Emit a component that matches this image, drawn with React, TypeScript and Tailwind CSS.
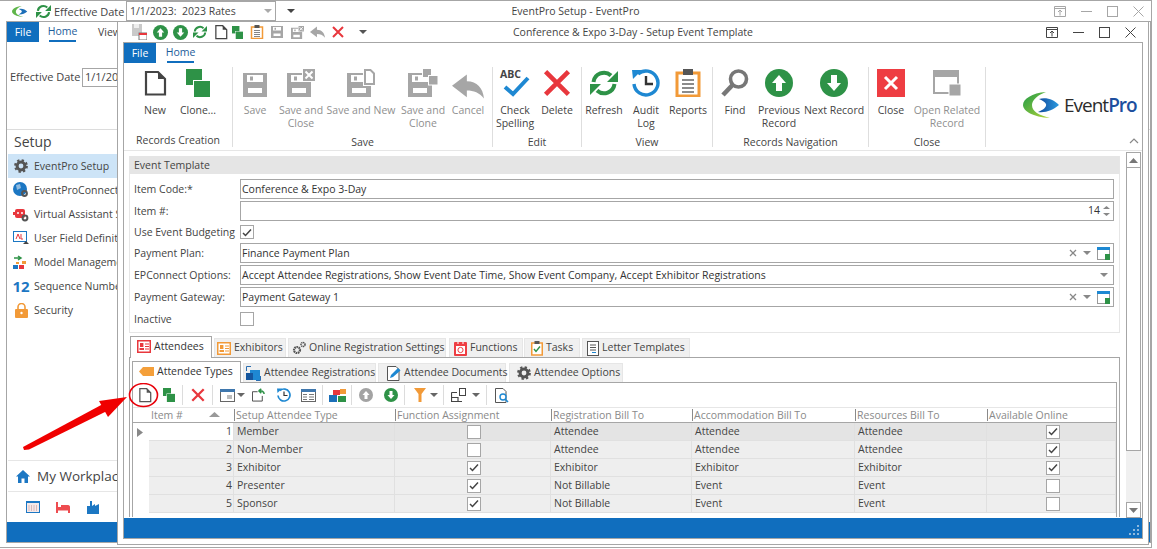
import React from "react";

const G = "#2e9247";
const R = "#e8373d";
const B = "#1e88d2";
const D = "#a6a6a6";

type P = { s?: number; c?: string; className?: string };
const Svg = ({ s = 28, v = 28, children, className }: { s?: number; v?: number; children: React.ReactNode; className?: string }) => (
  <svg width={s} height={s} viewBox={`0 0 ${v} ${v}`} className={className ?? "shrink-0"}>{children}</svg>
);

const Doc = ({ s = 28, c = "#444" }: P) => (
  <Svg s={s}><path d="M5 3 H17 L24 10 V25.5 H5 Z" fill="#fff" stroke={c} strokeWidth="2.2" /><path d="M17 3 V10 H24 Z" fill={c} /></Svg>
);
const Clone = ({ s = 28 }: P) => (
  <svg width={(s * 24) / 28} height={s} viewBox="0 0 24 28" className="shrink-0">
    <rect x="0" y="0" width="16" height="16" fill={G} />
    <rect x="7.5" y="11.5" width="17" height="17" fill={G} stroke="#fff" strokeWidth="1" />
  </svg>
);
const Disk = ({ c = D }: { c?: string }) => (
  <path d="M0 0 H24 V24 H0 Z M4 2 V9 H20 V2 Z M7 3.5 H10 V7.5 H7 Z M5 15 V20 H19 V15 Z" fill={c} fillRule="evenodd" />
);
const Save = ({ s = 24, c = D }: P) => <Svg s={s} v={24}><Disk c={c} /></Svg>;
const SaveClose = ({ s = 28, c = D }: P) => (
  <Svg s={s}>
    <g transform="translate(0 4)"><Disk c={c} /></g>
    <rect x="15.5" y="-.5" width="13" height="13" fill={c} stroke="#fff" /><path d="M18.5 2.5 L25.5 9.5 M25.5 2.5 L18.5 9.5" stroke="#fff" strokeWidth="2" />
  </Svg>
);
const SaveNew = ({ c = D }: P) => (
  <Svg s={28}>
    <g transform="translate(0 4)"><Disk c={c} /></g>
    <path d="M16 0 H23 L28 5 V17 H16 Z" fill="#fff" />
    <path d="M18 1 H23.5 L27 4.5 V15 H18 Z" fill="#fff" stroke={c} strokeWidth="2" />
  </Svg>
);
const SaveClone = ({ c = D }: P) => (
  <svg width="30" height="28" viewBox="0 0 30 28" className="shrink-0">
    <g transform="translate(0 4)"><Disk c={c} /></g>
    <rect x="14.5" y="-.5" width="9" height="9" fill={c} stroke="#fff" /><rect x="20.5" y="6.5" width="9.5" height="9.5" fill={c} stroke="#fff" />
  </svg>
);
const Reply = ({ s = 28, c = D }: P) => (
  <Svg s={s}><path d="M0 13 L13 3 V9 C22 9 27 15 28 24 C24 19 19 17 13 17 V23 Z" fill={c} /></Svg>
);
const XIcon = ({ s = 28 }: P) => (
  <Svg s={s}><path d="M4 4 L24 24 M24 4 L4 24" stroke={R} strokeWidth="4" /></Svg>
);
const Refresh = ({ s = 28 }: P) => (
  <Svg s={s}>
    <path d="M3.5 13 A10.5 10.5 0 0 1 21 6.5" fill="none" stroke={G} strokeWidth="4" />
    <polygon points="28,2 28,13 17,13" fill={G} />
    <path d="M24.5 15 A10.5 10.5 0 0 1 7 21.5" fill="none" stroke={G} strokeWidth="4" />
    <polygon points="0,26 0,15 11,15" fill={G} />
  </Svg>
);
const Audit = ({ s = 28 }: P) => (
  <Svg s={s}>
    <path d="M6 5 A12 12 0 1 1 2 15" fill="none" stroke={B} strokeWidth="3.4" />
    <polygon points="0,1 10,1 1,10" fill={B} />
    <path d="M14 7 V15 H21" fill="none" stroke="#333" strokeWidth="2.4" />
  </Svg>
);
const Reports = ({ s = 28 }: P) => (
  <Svg s={s}>
    <rect x="3" y="4" width="22" height="23" fill="#fff" stroke="#f29a38" strokeWidth="3" />
    <rect x="9" y="0" width="10" height="6" fill="#555" />
    <path d="M8 11 H20 M8 15 H20 M8 19 H20 M8 23 H20" stroke="#666" strokeWidth="1.6" />
  </Svg>
);
const Find = ({ s = 28 }: P) => (
  <Svg s={s}>
    <circle cx="17.5" cy="10" r="8" fill="#fff" stroke="#777" strokeWidth="3.6" />
    <path d="M11.5 16 L2 26" stroke="#777" strokeWidth="4.6" />
  </Svg>
);
const Arrow = ({ s = 28, up, c = G }: P & { up?: boolean }) => (
  <Svg s={s}>
    <circle cx="14" cy="14" r="14" fill={c} />
    <path d={up ? "M14 6 L21 14 H17 V22 H11 V14 H7 Z" : "M14 22 L21 14 H17 V6 H11 V14 H7 Z"} fill="#fff" />
  </Svg>
);
const CloseSq = ({ s = 28 }: P) => (
  <Svg s={s}><rect width="28" height="28" fill="#ee3d42" /><path d="M8 8 L20 20 M20 8 L8 20" stroke="#fff" strokeWidth="3" /></Svg>
);
const OpenRel = ({ s = 28 }: P) => (
  <Svg s={s}>
    <rect x="1" y="2" width="24" height="22" fill="#fff" stroke={D} strokeWidth="2" /><rect x="0" y="1" width="26" height="7" fill={D} />
    <rect x="16" y="15" width="12" height="12" fill={D} stroke="#fff" />
  </Svg>
);
const Abc = () => (
  <div className="relative w-[30px] h-[28px]">
    <span className="absolute left-0 top-[-2px] text-[10.5px] font-bold text-[#444]">ABC</span>
    <svg width="30" height="28" viewBox="0 0 30 28" className="absolute left-0 top-0"><path d="M5 18 L13 25 L28 9" fill="none" stroke={B} strokeWidth="4" /></svg>
  </div>
);

const Caret = ({ c = "#666", className = "" }: { c?: string; className?: string }) => (
  <svg width="8" height="4" viewBox="0 0 8 4" className={`shrink-0 ${className}`}><path d="M0 0 H8 L4 4 Z" fill={c} /></svg>
);

const WinButtons = ({ c, gap }: { c: string; gap: string }) => (
  <div className={`flex items-center ${gap}`}>
    <svg width="12" height="11" viewBox="0 0 12 11"><path d="M.5.5 H11.5 V10.5 H.5 Z M.5 2.5 H11.5" fill="none" stroke={c} /><path d="M6 9.5 V4.5 M4 6 L6 4 L8 6" fill="none" stroke={c} /></svg>
    <svg width="11" height="11" viewBox="0 0 11 11"><path d="M0 5.5 H11" stroke={c} /></svg>
    <svg width="11" height="11" viewBox="0 0 11 11"><rect x=".5" y=".5" width="10" height="10" fill="none" stroke={c} /></svg>
    <svg width="11" height="11" viewBox="0 0 11 11"><path d="M.5 .5 L10.5 10.5 M10.5 .5 L.5 10.5" stroke={c} /></svg>
  </div>
);

const RBtn = ({ w, label, dis, mt = 0, children }: { w: number; label: React.ReactNode; dis?: boolean; mt?: number; children: React.ReactNode }) => (
  <div className={`flex flex-col items-center ${dis ? "text-[#8f8f8f]" : "text-[#444]"}`} style={{ width: w }}>
    <div className="h-[37px] flex items-start justify-center pt-[2px]"><div style={{ marginTop: mt }}>{children}</div></div>
    <div className="text-center whitespace-nowrap leading-[13px] text-[10.5px]">{label}</div>
  </div>
);

const Group = ({ w, pl, label, children }: { w: number; pl: number; label: string; children: React.ReactNode }) => (
  <div className="flex flex-col border-r border-[#dedede] h-[80px] shrink-0" style={{ width: w }}>
    <div className="flex h-[65px]" style={{ paddingLeft: pl }}>{children}</div>
    <div className="text-center text-[10.5px] leading-[14px] text-[#444] mt-[3px] pt-[2px] whitespace-nowrap">{label}</div>
  </div>
);

const Logo = () => (
  <div className="flex items-center">
    <svg width="40" height="26" viewBox="0 0 40 26" className="shrink-0">
      <defs>
        <linearGradient id="lg" x1="0" y1="0" x2="1" y2="1"><stop offset="0" stopColor="#1e9a47" /><stop offset="1" stopColor="#b7d53a" /></linearGradient>
        <linearGradient id="lb" x1="0" y1="0" x2="1" y2="0"><stop offset="0" stopColor="#12489b" /><stop offset="1" stopColor="#2b9be0" /></linearGradient>
      </defs>
      <path d="M23 0 C9 1 0 7 0 13 C0 19 10 25 27 26 C15 23 9 19 9 13 C9 8 15 3 23 0 Z" fill="url(#lg)" />
      <path d="M16 7 C24 5 31 8 36 13 C30 18 23 21 15 20 C20 18 24 15 23 12 C22 10 19 8 16 7 Z" fill="url(#lb)" />
    </svg>
    <span className="text-[19px] tracking-[-1px] leading-none text-[#2c2c2c] ml-[1px]">Event<span className="text-[#1c4f9e] font-semibold">Pro</span></span>
  </div>
);

const Input = ({ children, right }: { children?: React.ReactNode; right?: React.ReactNode }) => (
  <div className="flex-1 h-[20px] border border-[#a6a6a6] bg-white flex items-center pl-[1px] pr-[3px] text-[10.5px] text-[#333]">
    <div className="flex-1 whitespace-nowrap pt-[1px]">{children}</div>
    {right}
  </div>
);
const Check = ({ on }: { on?: boolean }) => (
  <div className="w-[14px] h-[14px] border border-[#a6a6a6] bg-white shrink-0 flex items-center justify-center">
    {on && <svg width="10" height="9" viewBox="0 0 10 9"><path d="M1 5 L3.5 7.5 L9 1.5" fill="none" stroke="#444" strokeWidth="1.5" /></svg>}
  </div>
);
const Row = ({ label, children, h = "h-[20px]" }: { label: string; children: React.ReactNode; h?: string }) => (
  <div className={`flex items-center ${h} mb-[2px]`}>
    <div className="w-[106px] shrink-0 text-[10.5px] text-[#444] whitespace-nowrap pt-[2px]">{label}</div>
    {children}
  </div>
);
const PickIcon = () => (
  <svg width="13" height="13" viewBox="0 0 13 13" className="shrink-0"><rect x=".5" y=".5" width="12" height="12" fill="#fff" stroke="#9a9a9a" /><rect width="13" height="3" fill={B} /><rect x="8" y="7" width="5" height="6" fill={G} /></svg>
);
const ClearPick = () => (
  <div className="flex items-center">
    <svg width="8" height="8" viewBox="0 0 8 8" className="mr-[6px]"><path d="M1 1 L7 7 M7 1 L1 7" stroke="#888" strokeWidth="1.3" /></svg>
    <Caret c="#888" className="mr-[6px]" />
    <PickIcon />
  </div>
);

const TabIconA = ({ c }: { c: string }) => (
  <svg width="14" height="13" viewBox="0 0 14 13" className="shrink-0"><rect x=".75" y=".75" width="12.5" height="11.5" fill="#fff" stroke={c} strokeWidth="1.5" /><rect x="3" y="3" width="3.4" height="4" fill={c} /><rect x="2.5" y="8" width="4.5" height="2" fill={c} /><path d="M8 4 H12 M8 6.5 H12 M8 9 H12" stroke={c} /></svg>
);
const Gears = () => (
  <svg width="14" height="14" viewBox="0 0 14 14" className="shrink-0"><circle cx="5" cy="9" r="3" fill="none" stroke="#555" strokeWidth="2.2" strokeDasharray="1.6 .6" /><circle cx="11" cy="3.5" r="2" fill="none" stroke="#555" strokeWidth="1.6" strokeDasharray="1.2 .5" /></svg>
);
const Gear = ({ s = 14 }: { s?: number }) => (
  <svg width={s} height={s} viewBox="0 0 14 14" className="shrink-0"><circle cx="7" cy="7" r="3.9" fill="none" stroke="#555" strokeWidth="3" /><circle cx="7" cy="7" r="5.8" fill="none" stroke="#555" strokeWidth="2.2" strokeDasharray="2.3 2.25" /></svg>
);
const Cal = () => (
  <svg width="13" height="15" viewBox="0 0 13 15" className="shrink-0"><rect width="13" height="14" y="1" fill="#ee3d42" rx="1" /><rect x="2" y="5" width="9" height="8" fill="#fff" /><path d="M4 1 V3 M9 1 V3" stroke="#fff" /><circle cx="6.5" cy="9" r="2.6" fill="none" stroke="#ee3d42" /></svg>
);
const Clip = () => (
  <svg width="12" height="15" viewBox="0 0 12 15" className="shrink-0"><rect x=".75" y="2" width="10.5" height="12" fill="#fff" stroke="#f29a38" strokeWidth="1.5" /><rect x="3.5" y="0" width="5" height="3" fill="#555" /><path d="M3 8 L5 10.5 L9 5.5" fill="none" stroke={G} strokeWidth="1.4" /></svg>
);
const LetterI = () => (
  <svg width="12" height="15" viewBox="0 0 12 15" className="shrink-0"><rect x=".5" y=".5" width="11" height="14" fill="#fff" stroke="#555" /><path d="M3 4 H9 M3 6.5 H9 M3 9 H9" stroke="#555" /><path d="M5 11.5 H9" stroke={B} /></svg>
);
const Tag = () => (
  <svg width="15" height="9" viewBox="0 0 15 9" className="shrink-0"><path d="M4 0 H15 V9 H4 L0 4.5 Z" fill="#f49f3a" /></svg>
);
const Reg = () => (
  <svg width="15" height="15" viewBox="0 0 15 15" className="shrink-0"><path d="M.5 5 V.5 H5 M10 14.5 H14.5 V10" fill="none" stroke="#2a6db0" /><rect x="4" y="4" width="10" height="10" fill={B} /><rect x="0" y="7" width="7" height="7" fill="#15569e" /></svg>
);
const DocEdit = () => (
  <svg width="14" height="15" viewBox="0 0 14 15" className="shrink-0"><path d="M.5 .5 H9 L12 3.5 V14.5 H.5 Z" fill="#fff" stroke="#555" /><path d="M3 12 L4 9 L11 2 L13.5 4.5 L6 11 Z" fill={B} /></svg>
);

const Tab = ({ w, active, icon, label, mr = 2, pl = 2 }: { w: number; active?: boolean; icon: React.ReactNode; label: string; mr?: number; pl?: number }) => (
  <div
    className={`flex items-center gap-[3px] text-[10.5px] whitespace-nowrap shrink-0 ${active
      ? "h-[22px] border border-b-0 border-[#a6a6a6] bg-white text-[#333] mb-[-1px] pb-[2px] relative z-10"
      : "h-[19px] border border-b-0 border-[#e6e6e6] bg-[#f0f0f0] text-[#444]"}`}
    style={{ width: w, marginRight: mr, paddingLeft: pl }}
  >
    {icon}
    <span>{label}</span>
  </div>
);

const Sep = () => <div className="w-px h-[20px] bg-[#dcdcdc] shrink-0" />;
const Tb = ({ w, children, ml = 0 }: { w: number; children?: React.ReactNode; ml?: number }) => (
  <div className="flex items-center justify-center shrink-0" style={{ width: w, marginLeft: ml }}>{children}</div>
);

const Cols = [16, 85, 161, 156, 141, 163, 132, 129];
const headers = ["", "Item #", "Setup Attendee Type", "Function Assignment", "Registration Bill To", "Accommodation Bill To", "Resources Bill To", "Available Online"];
const rows = [
  ["1", "Member", false, "Attendee", "Attendee", "Attendee", true],
  ["2", "Non-Member", false, "Attendee", "Attendee", "Attendee", true],
  ["3", "Exhibitor", true, "Exhibitor", "Exhibitor", "Exhibitor", true],
  ["4", "Presenter", true, "Not Billable", "Event", "Event", false],
  ["5", "Sponsor", true, "Not Billable", "Event", "Event", false],
] as const;

const Grid = () => (
  <div className="text-[10.5px] text-[#444]">
    <div className="flex h-[16px] border-b border-t border-t-[#e6e6e6] border-b-[#a6a6a6] text-[#8a8a8a] leading-[14px]">
      {headers.map((h, i) => (
        <div key={i} className="relative pl-[2px] whitespace-nowrap flex items-center" style={{ width: Cols[i] }}>
          {i > 1 && <span className="absolute left-0 top-[1px] h-[12px] w-px bg-[#8a8a8a]" />}
          {h}
          {i === 1 && <span className="absolute right-[14px] top-[4px]"><svg width="11" height="5" viewBox="0 0 11 5"><path d="M0 5 L5.5 0 L11 5 Z" fill="#999" /></svg></span>}
        </div>
      ))}
    </div>
    {rows.map((r, i) => {
      const bg = i === 0 ? "bg-[#e4e4e4]" : "bg-[#eeeeee]";
      const cell = `flex items-center h-[18px] border-b border-r border-[#e0e0e0] pl-[3px] whitespace-nowrap ${bg}`;
      return (
        <div key={i} className="flex h-[18px]">
          <div className="flex items-center justify-center bg-white" style={{ width: Cols[0] }}>
            {i === 0 && <svg width="6" height="9" viewBox="0 0 6 9" className="mr-[3px]"><path d="M0 0 L6 4.5 L0 9 Z" fill="#888" /></svg>}
          </div>
          <div className={`flex items-center justify-end h-[18px] border-b border-r border-[#e0e0e0] pr-[1px] ${i === 0 ? "bg-white" : "bg-[#eeeeee]"}`} style={{ width: Cols[1] }}>{r[0]}</div>
          <div className={cell} style={{ width: Cols[2] }}>{r[1]}</div>
          <div className={`${cell} justify-center`} style={{ width: Cols[3] }}><Check on={r[2]} /></div>
          <div className={cell} style={{ width: Cols[4] }}>{r[3]}</div>
          <div className={cell} style={{ width: Cols[5] }}>{r[4]}</div>
          <div className={cell} style={{ width: Cols[6] }}>{r[5]}</div>
          <div className={`${cell} justify-center`} style={{ width: Cols[7] }}><Check on={r[6]} /></div>
        </div>
      );
    })}
  </div>
);

const ScrollBar = () => (
  <div className="w-[15px] h-[366px] mt-[1px] shrink-0 bg-[#f0f0f0] flex flex-col">
    <div className="h-[16px] border border-[#a6a6a6] bg-white flex items-center justify-center"><svg width="9" height="5" viewBox="0 0 9 5"><path d="M0 5 L4.5 0 L9 5 Z" fill="#777" /></svg></div>
    <div className="h-[283px] border border-t-0 border-[#a6a6a6] bg-white" />
    <div className="flex-1" />
    <div className="h-[16px] border border-[#a6a6a6] bg-white flex items-center justify-center"><svg width="9" height="5" viewBox="0 0 9 5"><path d="M0 0 L4.5 5 L9 0 Z" fill="#777" /></svg></div>
  </div>
);

const Ribbon = () => (
  <div className="h-[108px] border-b border-[#e6e6e6] relative shrink-0">
    <div className="flex h-[20px]">
      <div className="w-[32px] h-[20px] bg-[#106ebe] text-white text-[10.5px] flex items-center justify-center pt-[2px]">File</div>
      <div className="ml-[11px] w-[27px] h-[20px] border-b-2 border-[#106ebe] text-[10.5px] text-[#1c5c9a] flex items-center justify-center pt-[2px]">Home</div>
    </div>
    <div className="flex items-start mt-[4px]">
      <Group w={109} pl={10} label="Records Creation">
        <RBtn w={42} label="New"><Doc s={28} /></RBtn>
        <RBtn w={44} label="Clone..."><Clone /></RBtn>
      </Group>
      <Group w={260} pl={4} label="Save">
        <RBtn w={36} dis mt={4} label="Save"><Save /></RBtn>
        <RBtn w={56} dis label={<>Save and<br />Close</>}><SaveClose /></RBtn>
        <RBtn w={64} dis label="Save and New"><SaveNew /></RBtn>
        <RBtn w={60} dis label={<>Save and<br />Clone</>}><SaveClone /></RBtn>
        <RBtn w={30} dis mt={2} label="Cancel"><Reply s={32} /></RBtn>
      </Group>
      <Group w={89} pl={4} label="Edit">
        <RBtn w={36} label={<>Check<br />Spelling</>}><Abc /></RBtn>
        <RBtn w={48} mt={-2} label="Delete"><XIcon s={32} /></RBtn>
      </Group>
      <Group w={131} pl={1} label="View">
        <RBtn w={42} label="Refresh"><Refresh /></RBtn>
        <RBtn w={42} label={<>Audit<br />Log</>}><Audit /></RBtn>
        <RBtn w={42} label="Reports"><Reports /></RBtn>
      </Group>
      <Group w={156} pl={4} label="Records Navigation">
        <RBtn w={36} label="Find"><Find /></RBtn>
        <RBtn w={52} label={<>Previous<br />Record</>}><Arrow up /></RBtn>
        <RBtn w={58} label="Next Record"><Arrow /></RBtn>
      </Group>
      <Group w={117} pl={4} label="Close">
        <RBtn w={36} label="Close"><CloseSq /></RBtn>
        <RBtn w={76} dis label={<>Open Related<br />Record</>}><OpenRel /></RBtn>
      </Group>
      <div className="ml-[37px] mt-[25px]"><Logo /></div>
    </div>
    <svg width="10" height="6" viewBox="0 0 10 6" className="absolute right-[3px] bottom-[6px]"><path d="M1 5 L5 1 L9 5" fill="none" stroke="#888" strokeWidth="1.2" /></svg>
  </div>
);

const FormPanel = () => (
  <div className="border-x border-b border-[#e6e6e6] h-[177px] shrink-0">
    <div className="h-[18px] bg-[#e5e5e5] flex items-center pl-[4px] pt-[2px] text-[10.5px] text-[#444]">Event Template</div>
    <div className="pl-[4px] pr-[5px] pt-[5px]">
      <Row label="Item Code:*"><Input>Conference &amp; Expo 3-Day</Input></Row>
      <Row label="Item #:"><Input right={
        <div className="flex items-center gap-[3px]"><span>14</span><div className="flex flex-col gap-[4px]"><svg width="7" height="3" viewBox="0 0 7 3"><path d="M0 3 L3.5 0 L7 3 Z" fill="#888" /></svg><svg width="7" height="3" viewBox="0 0 7 3"><path d="M0 0 L3.5 3 L7 0 Z" fill="#888" /></svg></div></div>
      } /></Row>
      <Row label="Use Event Budgeting" h="h-[18px]"><Check on /></Row>
      <Row label="Payment Plan:"><Input right={<ClearPick />}>Finance Payment Plan</Input></Row>
      <Row label="EPConnect Options:"><Input right={<Caret c="#888" className="mr-[2px]" />}>Accept Attendee Registrations, Show Event Date Time, Show Event Company, Accept Exhibitor Registrations</Input></Row>
      <Row label="Payment Gateway:"><Input right={<ClearPick />}>Payment Gateway 1</Input></Row>
      <Row label="Inactive" h="h-[19px]"><Check /></Row>
    </div>
  </div>
);

const Toolbar = () => (
  <div className="flex items-center h-[24px]">
    <Tb w={16} ml={4}><Doc s={16} c="#555" /></Tb>
    <Tb w={14} ml={9}><Clone s={14} /></Tb>
    <Tb w={1} ml={6}><Sep /></Tb>
    <Tb w={16} ml={7}><XIcon s={16} /></Tb>
    <Tb w={1} ml={6}><Sep /></Tb>
    <Tb w={15} ml={7}><svg width="15" height="13" viewBox="0 0 15 13"><rect x=".5" y=".5" width="14" height="12" fill="#fff" stroke="#666" /><rect width="15" height="3" fill="#3f77ad" /><rect x="7" y="6" width="5" height="4" fill="#bbb" /></svg></Tb>
    <Tb w={8} ml={2}><Caret /></Tb>
    <Tb w={14} ml={7}><svg width="15" height="14" viewBox="0 0 15 14"><path d="M.5 3.5 H6 M11 8 V13.5 H.5 V3.5" fill="none" stroke="#444" /><path d="M13 6 C13 3 10 2 7 2.5 M7 2.5 L10 .5 M7 2.5 L10 5" fill="none" stroke={G} strokeWidth="1.6" /></svg></Tb>
    <Tb w={14} ml={11}><Audit s={14} /></Tb>
    <Tb w={15} ml={10}><svg width="15" height="13" viewBox="0 0 15 13"><rect x=".5" y=".5" width="14" height="12" fill="#fff" stroke="#666" /><rect width="15" height="3" fill="#3f77ad" /><path d="M2 5.5 H6 M2 8 H6 M2 10.5 H6 M8 5.5 H13 M8 8 H13 M8 10.5 H13" stroke="#777" /></svg></Tb>
    <Tb w={1} ml={6}><Sep /></Tb>
    <Tb w={17} ml={6}><svg width="17" height="13" viewBox="0 0 17 13"><rect y="6" width="8" height="7" fill="#1c6fb8" /><rect x="4" y="1" width="7" height="5" fill="#e8373d" /><rect x="9" y="7" width="8" height="6" fill={G} /><rect x="11" width="6" height="5" fill="#f29a38" /></svg></Tb>
    <Tb w={1} ml={5}><Sep /></Tb>
    <Tb w={14} ml={7}><Arrow s={14} up c="#a3a3a3" /></Tb>
    <Tb w={15} ml={10}><Arrow s={14} /></Tb>
    <Tb w={1} ml={6}><Sep /></Tb>
    <Tb w={12} ml={9}><svg width="12" height="14" viewBox="0 0 12 14"><path d="M0 0 H12 L7.5 6 V14 H4.5 V6 Z" fill="#f29a38" /></svg></Tb>
    <Tb w={8} ml={4}><Caret /></Tb>
    <Tb w={1} ml={5}><Sep /></Tb>
    <Tb w={15} ml={7}><svg width="15" height="15" viewBox="0 0 15 15"><path d="M.5 4.5 H6 M.5 4.5 V13.5 H11 M.5 9.5 H7 V13.5" fill="none" stroke="#444" strokeWidth="1.2" /><rect x="8.5" y=".5" width="6" height="7" fill="#fff" stroke="#444" /></svg></Tb>
    <Tb w={8} ml={6}><Caret /></Tb>
    <Tb w={1} ml={6}><Sep /></Tb>
    <Tb w={14} ml={8}><svg width="14" height="15" viewBox="0 0 14 15"><path d="M.5 .5 H8 L11 3.5 V14.5 H.5 Z" fill="#fff" stroke="#555" /><circle cx="8" cy="9" r="3" fill="#fff" stroke={B} strokeWidth="1.4" /><path d="M10 11 L13 14" stroke={B} strokeWidth="1.6" /></svg></Tb>
  </div>
);

const Tabs = () => (
  <div className="flex flex-col flex-1 min-h-0 mt-[3px]">
    <div className="flex items-end h-[21px] pl-[1px] shrink-0">
      <Tab w={82} active pl={6} icon={<TabIconA c="#e8373d" />} label="Attendees" />
      <Tab w={72} pl={2} icon={<TabIconA c="#f29a38" />} label="Exhibitors" />
      <Tab w={158} pl={3} icon={<Gears />} label="Online Registration Settings" mr={3} />
      <Tab w={74} pl={4} icon={<Cal />} label="Functions" mr={1} />
      <Tab w={56} pl={6} icon={<Clip />} label="Tasks" mr={2} />
      <Tab w={108} pl={4} icon={<LetterI />} label="Letter Templates" />
    </div>
    <div className="flex-1 border border-[#a6a6a6] border-b-0 pl-[2px] pt-[4px] min-h-0">
      <div className="flex items-end h-[20px] shrink-0">
        <Tab w={109} active pl={6} icon={<Tag />} label="Attendee Types" mr={2} />
        <Tab w={133} pl={2} icon={<Reg />} label="Attendee Registrations" mr={2} />
        <Tab w={128} pl={8} icon={<DocEdit />} label="Attendee Documents" mr={3} />
        <Tab w={114} pl={7} icon={<Gear />} label="Attendee Options" />
      </div>
      <div className="border-t border-l border-r border-[#a6a6a6] w-[985px] h-[135px]">
        <Toolbar />
        <Grid />
      </div>
    </div>
  </div>
);

const FrontTitle = () => (
  <div className="grid grid-cols-[1fr_auto_1fr] items-center h-[20px] shrink-0 text-[10.5px] text-[#444]">
    <div className="flex items-center pl-[13px]">
      <svg width="16" height="16" viewBox="0 0 16 16" className="shrink-0"><rect x="1" width="10" height="12" fill="#c9c9c9" /><rect x="3" y="0" width="5" height="4" fill="#eee" /><rect x="8" y="9" width="8" height="7" fill="#fff" stroke="#777" /><rect x="8" y="9" width="8" height="2" fill="#e8373d" /></svg>
      <div className="w-[6px]" /><Arrow s={15} up />
      <div className="w-[5px]" /><Arrow s={15} />
      <div className="w-[5px]" /><Refresh s={14} />
      <div className="w-[6px]" /><Doc s={16} c="#444" />
      <div className="w-[3px]" /><Clone s={13} />
      <div className="w-[7px]" /><Reports s={14} />
      <div className="w-[7px]" /><Save s={12} />
      <div className="w-[8px]" /><SaveClose s={13} />
      <div className="w-[6px]" /><Reply s={15} />
      <div className="w-[6px]" /><XIcon s={14} />
      <div className="w-[14px]" /><Caret c="#555" />
    </div>
    <div className="whitespace-nowrap pt-[2px]">Conference &amp; Expo 3-Day - Setup Event Template</div>
    <div className="flex justify-end pr-[12px]"><WinButtons c="#444" gap="gap-[15px]" /></div>
  </div>
);

const SideItem = ({ icon, label, active }: { icon: React.ReactNode; label: string; active?: boolean }) => (
  <div className={`flex items-center h-[24px] pl-[5px] gap-[5px] text-[10.5px] text-[#444] whitespace-nowrap ${active ? "bg-[#cde4f7]" : ""}`}>
    <div className="w-[16px] flex justify-center shrink-0">{icon}</div>
    <span className="pt-[2px]">{label}</span>
  </div>
);

const BackWindow = () => (
  <div className="absolute left-[6px] top-[20px] w-[1145px] h-[522px] border border-[#a6a6a6] bg-white flex flex-col overflow-hidden">
    <div className="flex h-[20px] shrink-0 w-[110px] overflow-hidden">
      <div className="w-[32px] shrink-0 bg-[#106ebe] text-white text-[10.5px] flex items-center justify-center pt-[2px]">File</div>
      <div className="ml-[10px] w-[27px] shrink-0 border-b-2 border-[#106ebe] text-[10.5px] text-[#1c5c9a] flex items-center justify-center pt-[2px]">Home</div>
      <div className="ml-[22px] text-[10.5px] text-[#444] flex items-center pt-[2px]">View</div>
    </div>
    <div className="h-[88px] border-b border-[#dcdcdc] shrink-0 flex items-start pl-[3px] pt-[26px] text-[11px] text-[#444]">
      <span className="w-[72px] mt-[1px]">Effective Date</span>
      <div className="w-[35px] h-[19px] border border-r-0 border-[#a6a6a6] pl-[2px] whitespace-nowrap overflow-hidden">1/1/2023: 2023 Rates</div>
    </div>
    <div className="flex-1 flex flex-col min-h-0 w-[110px] overflow-hidden pl-[1px]">
      <div className="h-[24px] flex items-center pl-[6px] pb-[2px] text-[14px] text-[#444] shrink-0">Setup</div>
      <SideItem active icon={<Gear s={14} />} label="EventPro Setup" />
      <SideItem icon={<svg width="16" height="16" viewBox="0 0 16 16"><circle cx="7" cy="7" r="7" fill="#1c77c3" /><path d="M3 3 L7 2 L8 6 L4 8 Z" fill="#fff" opacity=".5" /><circle cx="11.5" cy="11.5" r="2.4" fill="none" stroke="#555" strokeWidth="2" /></svg>} label="EventProConnect Setup" />
      <SideItem icon={<svg width="16" height="16" viewBox="0 0 16 16"><rect x="2" y="3" width="10" height="9" rx="2" fill="#e8373d" /><rect x="0" y="6" width="2" height="3" fill="#e8373d" /><circle cx="5" cy="7" r="1" fill="#fff" /><circle cx="9" cy="7" r="1" fill="#fff" /><circle cx="12" cy="12" r="2.4" fill="none" stroke="#555" strokeWidth="2" /></svg>} label="Virtual Assistant Setup" />
      <SideItem icon={<svg width="16" height="16" viewBox="0 0 16 16"><rect x=".5" y="1.5" width="13" height="10" fill="#fff" stroke="#1c77c3" /><path d="M3 9 L5 4 L7 9 M8 4 V9 H10" fill="none" stroke="#e8373d" /><path d="M10 14 H16 L13 11 Z" fill="#444" /></svg>} label="User Field Definitions" />
      <SideItem icon={<svg width="16" height="16" viewBox="0 0 16 16"><path d="M1 4 H7 M5 2 L8 4 L5 6" fill="none" stroke={G} strokeWidth="1.5" /><rect x="0" y="11" width="5" height="4" fill="#1c77c3" /><rect x="6" y="11" width="5" height="4" fill="#e8373d" /><rect x="9" y="7" width="4" height="3" fill="#f29a38" /><rect x="3" y="8" width="3" height="2" fill="#f29a38" /></svg>} label="Model Management" />
      <SideItem icon={<span className="text-[15px] font-bold text-[#1c77c3] leading-none">12</span>} label="Sequence Numbers" />
      <SideItem icon={<svg width="13" height="15" viewBox="0 0 13 15"><path d="M3 6 V4 A3.5 3.5 0 0 1 10 4 V6" fill="none" stroke="#f29a38" strokeWidth="1.6" /><rect y="6" width="13" height="9" rx="1" fill="#f29a38" /><circle cx="6.5" cy="10" r="1.2" fill="#fff" /></svg>} label="Security" />
      <div className="flex-1" />
      <div className="border-t border-[#e6e6e6] h-[31px] flex items-center pl-[8px] gap-[7px] text-[13.5px] text-[#444] whitespace-nowrap shrink-0">
        <svg width="14" height="13" viewBox="0 0 14 13" className="shrink-0"><path d="M7 0 L14 6.5 H12 V13 H8.5 V8.5 H5.5 V13 H2 V6.5 H0 Z" fill="#1c77c3" /></svg>
        My Workplace
      </div>
      <div className="border-t border-[#e6e6e6] h-[31px] flex items-center pl-[18px] shrink-0">
        <svg width="14" height="12" viewBox="0 0 14 12" className="shrink-0"><rect x=".5" y=".5" width="13" height="11" fill="#f5e9e9" stroke="#1c77c3" /><rect width="14" height="2" fill="#1c77c3" /><path d="M3 4 V10 M5.5 4 V10 M8 4 V10 M10.5 4 V10" stroke="#d9b9b9" /></svg>
        <div className="w-[16px] shrink-0" />
        <svg width="14" height="11" viewBox="0 0 14 11" className="shrink-0"><path d="M0 0 H2 V5 H5 V3 H12 C13.5 3 14 4 14 5 V11 H12 V8.5 H2 V11 H0 Z" fill="#ee4c50" /></svg>
        <div className="w-[17px] shrink-0" />
        <svg width="12" height="13" viewBox="0 0 12 13" className="shrink-0"><path d="M0 5 H3 V0 H5 V5 L8 3 V5 L12 3 V13 H0 Z" fill="#1c77c3" /></svg>
      </div>
    </div>
    <div className="h-[20px] bg-[#106ebe] shrink-0" />
  </div>
);

const FrontWindow = () => (
  <div className="absolute left-[117px] top-[20px] w-[1032px] h-[524px] border border-[#a6a6a6] bg-white flex flex-col">
    <FrontTitle />
    <div className="mx-[5px] mb-[5px] flex-1 border border-[#a6a6a6] flex flex-col min-h-0">
      <Ribbon />
      <div className="flex flex-1 min-h-0 pl-[5px] pr-[1px] pt-[5px]">
        <div className="w-[991px] shrink-0 flex flex-col h-[361px]">
          <FormPanel />
          <Tabs />
        </div>
        <div className="flex-1" />
        <div className="mt-[-5px]"><ScrollBar /></div>
      </div>
      <div className="h-[20px] bg-[#106ebe] shrink-0 flex items-end justify-end pr-[2px] pb-[2px]">
        <svg width="11" height="11" viewBox="0 0 11 11" fill="#8fb8dd"><rect x="8" y="0" width="2" height="2" /><rect x="4" y="4" width="2" height="2" /><rect x="8" y="4" width="2" height="2" /><rect x="0" y="8" width="2" height="2" /><rect x="4" y="8" width="2" height="2" /><rect x="8" y="8" width="2" height="2" /></svg>
      </div>
    </div>
  </div>
);

const TopBar = () => (
  <div className="grid grid-cols-[1fr_auto_1fr] items-center h-[20px] text-[10.5px] text-[#444]">
    <div className="flex items-center pl-[12px]">
      <svg width="17" height="11" viewBox="0 0 40 26" className="shrink-0"><path d="M23 0 C9 1 0 7 0 13 C0 19 10 25 27 26 C15 23 9 19 9 13 C9 8 15 3 23 0 Z" fill="#5fb54a" /><path d="M16 7 C24 5 31 8 36 13 C30 18 23 21 15 20 C20 18 24 15 23 12 C22 10 19 8 16 7 Z" fill="#1c6fb8" /></svg>
      <div className="w-[7px]" /><Refresh s={15} />
      <span className="ml-[3px] w-[72px] whitespace-nowrap text-[11px] pt-[2px]">Effective Date</span>
      <div className="w-[150px] h-[20px] border border-[#a6a6a6] flex items-center justify-between pl-[3px] pr-[3px] whitespace-pre"><span className="pt-[2px]">{"1/1/2023:  2023 Rates"}</span><Caret c="#aaa" /></div>
      <div className="ml-[11px]"><Caret c="#444" /></div>
    </div>
    <div className="whitespace-nowrap pt-[2px]">EventPro Setup - EventPro</div>
    <div className="flex justify-end pr-[7px]"><WinButtons c="#a6a6a6" gap="gap-[15px]" /></div>
  </div>
);

const Annotation = () => (
  <svg width="1157" height="549" viewBox="0 0 1157 549" className="absolute left-0 top-0 pointer-events-none">
    <ellipse cx="143.5" cy="395" rx="14" ry="11.5" fill="none" stroke="#e8000a" strokeWidth="1.6" />
    <polygon points="23,447 24,450 29,449.5 107,411 103,404" fill="#f00000" />
    <polygon points="127,397 99,401 108,417" fill="#f00000" />
  </svg>
);

export default function App() {
  return (
    <div className="relative w-[1157px] h-[549px] overflow-hidden bg-white font-['Open_Sans',sans-serif]">
      <div className="relative w-[1152px] h-[548px] border-y border-r border-[#a6a6a6]">
        <TopBar />
        <BackWindow />
        <FrontWindow />
      </div>
      <Annotation />
    </div>
  );
}
